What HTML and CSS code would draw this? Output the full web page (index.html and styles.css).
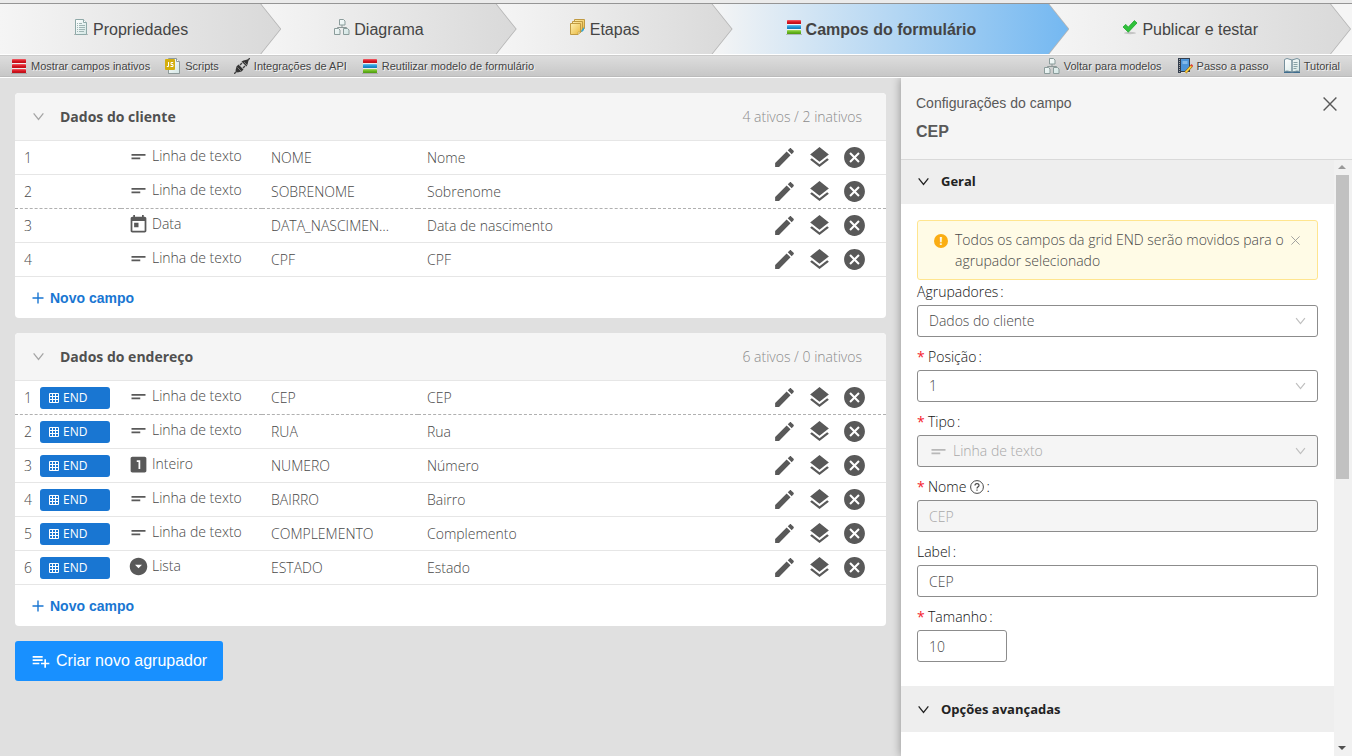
FILE: index.html
```html
<!DOCTYPE html>
<html lang="pt-BR">
<head>
<meta charset="utf-8">
<title>Campos do formulário</title>
<link rel="stylesheet" href="styles.css">
</head>
<body>
<svg class="sprite" aria-hidden="true">
  <defs>
    <linearGradient id="g-red" x1="0" y1="0" x2="0" y2="1"><stop offset="0" stop-color="#f4606a"/><stop offset=".5" stop-color="#d8141f"/><stop offset="1" stop-color="#b90f19"/></linearGradient>
    <linearGradient id="g-blue" x1="0" y1="0" x2="0" y2="1"><stop offset="0" stop-color="#6cc4ee"/><stop offset=".5" stop-color="#1d94d6"/><stop offset="1" stop-color="#1579b8"/></linearGradient>
    <linearGradient id="g-green" x1="0" y1="0" x2="0" y2="1"><stop offset="0" stop-color="#a6de62"/><stop offset=".5" stop-color="#69b81e"/><stop offset="1" stop-color="#4e9a12"/></linearGradient>
    <linearGradient id="g-gold" x1="0" y1="0" x2="1" y2="1"><stop offset="0" stop-color="#fff0b0"/><stop offset="1" stop-color="#e9b83f"/></linearGradient>
    <linearGradient id="g-page" x1="0" y1="0" x2="1" y2="1"><stop offset="0" stop-color="#ffffff"/><stop offset="1" stop-color="#d3e6e4"/></linearGradient>
  </defs>
  <symbol id="short-text" viewBox="0 0 24 24"><path d="M4 9h16v2H4zm0 4h10v2H4z"/></symbol>
  <symbol id="event" viewBox="0 0 24 24"><path d="M19 3h-1V1h-2v2H8V1H6v2H5c-1.110 0-2 .9-2 2v14c0 1.100.89 2 2 2h14c1.100 0 2-.9 2-2V5c0-1.100-.9-2-2-2zm0 16H5V8h14v11zM7 10h5v5H7z"/></symbol>
  <symbol id="one" viewBox="0 0 24 24"><path d="M19 3H5c-1.100 0-2 .9-2 2v14c0 1.100.9 2 2 2h14c1.100 0 2-.9 2-2V5c0-1.100-.9-2-2-2zm-5 14h-2V9h-2V7h4v10z"/></symbol>
  <symbol id="drop" viewBox="0 0 24 24"><path d="M12 2C6.480 2 2 6.480 2 12s4.480 10 10 10 10-4.480 10-10S17.520 2 12 2zm0 12l-4-4h8l-4 4z"/></symbol>
  <symbol id="edit" viewBox="0 0 24 24"><path d="M3 17.250V21h3.750L17.810 9.940l-3.750-3.750L3 17.250zM20.710 7.040c.39-.39.39-1.020 0-1.410l-2.340-2.340c-.39-.39-1.020-.39-1.410 0l-1.830 1.830 3.750 3.750 1.830-1.830z"/></symbol>
  <symbol id="layers" viewBox="0 0 24 24"><path d="M11.990 18.540l-7.370-5.730L3 14.070l9 7 9-7-1.630-1.270-7.380 5.740zM12 16l7.360-5.730L21 9l-9-7-9 7 1.630 1.270L12 16z"/></symbol>
  <symbol id="cancel" viewBox="0 0 24 24"><path d="M12 2C6.470 2 2 6.470 2 12s4.470 10 10 10 10-4.470 10-10S17.530 2 12 2zm5 13.590L15.590 17 12 13.410 8.410 17 7 15.590 10.590 12 7 8.410 8.410 7 12 10.590 15.590 7 17 8.410 13.410 12 17 15.590z"/></symbol>
  <symbol id="grid" viewBox="0 0 10 10"><path fill="none" stroke="currentColor" d="M.5.5h9v9h-9zM3.500 0v10M6.500 0v10M0 3.500h10M0 6.500h10"/></symbol>
  <symbol id="chevron" viewBox="0 0 10 8"><path fill="none" stroke="currentColor" stroke-width="1.200" d="M.6 1.200 5 6.600 9.400 1.200"/></symbol>
  <symbol id="plus" viewBox="0 0 12 12"><path fill="none" stroke="currentColor" stroke-width="1.400" d="M6 .5v11M.5 6h11"/></symbol>
  <symbol id="cross" viewBox="0 0 14 14"><path fill="none" stroke="currentColor" stroke-width="1.400" d="m.6.6 12.800 12.800M13.400.6.6 13.400"/></symbol>
  <symbol id="add-list" viewBox="0 0 24 24"><path d="M14 10H2v2h12v-2zm0-4H2v2h12V6zm4 8v-4h-2v4h-4v2h4v4h2v-4h4v-2h-4zM2 16h8v-2H2v2z"/></symbol>
  <symbol id="help" viewBox="0 0 14 14"><circle cx="7" cy="7" r="6.400" fill="none" stroke="currentColor"/><path fill="none" stroke="currentColor" stroke-width="1.200" d="M5 5.600C5 3 9 3 9 5.400 9 6.800 7 6.800 7 8.600M7 9.600v1.200"/></symbol>
  <symbol id="bars" viewBox="0 0 16 16"><path fill="#888" opacity=".5" d="M0 15h16v1H0z"/><path fill="#fff" opacity=".6" d="M1 1h14v14H1z"/><rect x="1" y="1" width="14" height="4" rx=".6" fill="url(#g-red)"/><rect x="1" y="6" width="14" height="4" rx=".6" fill="url(#g-blue)"/><rect x="1" y="11" width="14" height="4" rx=".6" fill="url(#g-green)"/></symbol>
  <symbol id="bars-red" viewBox="0 0 16 16"><path fill="#888" opacity=".5" d="M0 15h16v1H0z"/><path fill="#fff" opacity=".6" d="M1 1h14v14H1z"/><rect x="1" y="1" width="14" height="4" rx=".6" fill="url(#g-red)"/><rect x="1" y="6" width="14" height="4" rx=".6" fill="url(#g-red)"/><rect x="1" y="11" width="14" height="4" rx=".6" fill="url(#g-red)"/></symbol>
  <symbol id="page" viewBox="0 0 16 16"><path fill="#888" opacity=".5" d="M1 15h14v1H1z"/><path fill="url(#g-page)" stroke="#8fa9a8" d="M2.500.5h8l3 3v12h-11z"/><path fill="#fff" stroke="#8fa9a8" d="M10.500.5v3h3"/><path stroke="#9fb5b4" d="M4 4.500h1m1 0h3M4 6.500h1m1 0h6M4 8.500h1m1 0h6M4 10.500h1m1 0h6M4 12.500h1m1 0h5"/></symbol>
  <symbol id="tree" viewBox="0 0 16 16"><path fill="none" stroke="#8b9796" d="M8 6v3M3.500 10V8.500h9V10"/><path fill="url(#g-page)" stroke="#8b9c9b" d="M5.500.5h4l1.500 1.500v4H5.500zM.5 9.500h4L6 11v4.500H.5zM9.500 9.500h4L15 11v4.500H9.500z"/></symbol>
  <symbol id="stack" viewBox="0 0 16 16"><path fill="url(#g-gold)" stroke="#c09a42" d="M4.500.5h10v9l-2 2h-8z"/><path fill="url(#g-gold)" stroke="#c09a42" d="M2.500 2.500h10v9l-2 2h-8z"/><path fill="#31a6d8" d="m11 12 3-4v3l-2 2z"/><path fill="url(#g-gold)" stroke="#c09a42" d="M.5 4.500h10v8.500l-2.500 2.500H.5z"/><path fill="#fff3c4" stroke="#c09a42" stroke-width=".6" d="M8 15.500V13h2.500z"/></symbol>
  <symbol id="check" viewBox="0 0 16 16"><ellipse cx="8" cy="14" rx="6" ry="1.200" fill="#888" opacity=".4"/><path fill="#2fc23a" stroke="#1fa32d" stroke-width=".8" d="M1 8 3.800 5.400 6.200 8.200 12.400 1.600 15 4 6.300 13.200z"/></symbol>
  <symbol id="script" viewBox="0 0 16 16"><path fill="#888" opacity=".5" d="M3 15h12v1H3z"/><path fill="url(#g-page)" stroke="#8e9a99" d="M3.500.5h8l3 3v12h-11z"/><path fill="#fff" stroke="#8e9a99" d="M11.500.5v3h3"/><rect width="10" height="11" y="1" rx="1" fill="#d4ae0d"/><path fill="none" stroke="#fff" d="M3.500 4v4.500H1.800M8.200 4.500H6v2h2v2H5.500"/></symbol>
  <symbol id="plug" viewBox="0 0 16 16"><path fill="none" stroke="#444" stroke-width="1.400" d="m0 16 3-3M13 3l3-3M6 7l2-2M9 10l2-2"/><path fill="#333" d="m2.500 8.500 2-2 5 5-2 2-4 1-2-2zM7.500 3.500l2-1 4-1 1 1-1 4-1 2z"/><path stroke="#8c8c8c" stroke-width=".8" d="m3.500 9.500 3.500 3.500M10 4l3 3"/></symbol>
  <symbol id="notebook" viewBox="0 0 16 16"><path fill="#343e4d" d="M1 0h12v15H1z"/><path fill="#4c94d8" d="M4 1h8v12H4z"/><path fill="#83b9e9" d="M5.500 3h5v3h-5z"/><path stroke="#ddd" d="M4 14.500h9"/><path stroke="#aaa" d="M2.500 1v13" stroke-dasharray="1 1"/><path stroke="#8b5b12" stroke-width="2.600" d="m8.500 14.500 6.500-7"/><path stroke="#ffd641" stroke-width="1.800" d="m8.500 14.500 6.500-7"/><path fill="#e53c38" d="m13.500 7.500 1-1.500 1.500 1.500-1 1.500z"/></symbol>
  <symbol id="book" viewBox="0 0 16 16"><path fill="#3f6d8f" d="M0 2h16v13H0z"/><path fill="url(#g-page)" stroke="#76909c" d="M.5 1.500 3 .5l5 1.500v12L3 13l-2.500.5zM15.500 1.500 13 .5 8 2v12l5-1 2.500.5z"/><path stroke="#89a3a7" d="M9.500 4.500h4m-4 2h4m-4 2h4m-4 2h3"/></symbol>
</svg>

<nav class="steps">
  <a class="step" href="#"><svg class="ico16"><use href="#page"/></svg>Propriedades</a>
  <a class="step" href="#"><svg class="ico16"><use href="#tree"/></svg>Diagrama</a>
  <a class="step" href="#"><svg class="ico16"><use href="#stack"/></svg>Etapas</a>
  <a class="step step-current" href="#"><svg class="ico16"><use href="#bars"/></svg>Campos do formulário</a>
  <a class="step" href="#"><svg class="ico16"><use href="#check"/></svg>Publicar e testar</a>
</nav>

<div class="toolbar">
  <a class="tool" href="#"><svg class="ico16"><use href="#bars-red"/></svg>Mostrar campos inativos</a>
  <a class="tool" href="#"><svg class="ico16"><use href="#script"/></svg>Scripts</a>
  <a class="tool" href="#"><svg class="ico16"><use href="#plug"/></svg>Integrações de API</a>
  <a class="tool tool-last" href="#"><svg class="ico16"><use href="#bars"/></svg>Reutilizar modelo de formulário</a>
  <a class="tool" href="#"><svg class="ico16"><use href="#tree"/></svg>Voltar para modelos</a>
  <a class="tool" href="#"><svg class="ico16"><use href="#notebook"/></svg>Passo a passo</a>
  <a class="tool" href="#"><svg class="ico16"><use href="#book"/></svg>Tutorial</a>
</div>

<div class="workspace">
  <main class="groups">
    <section class="group">
      <header class="group-head">
        <svg class="chev"><use href="#chevron"/></svg>
        <h2>Dados do cliente</h2>
        <span class="count">4 ativos / 2 inativos</span>
      </header>
      <table class="fields">
        <colgroup><col class="c-num"><col class="c-type"><col class="c-name"><col class="c-label"><col></colgroup>
        <tbody>
        <tr><td><div class="pos">1</div></td><td><div class="type"><svg><use href="#short-text"/></svg>Linha de texto</div></td><td class="clip">NOME</td><td>Nome</td><td><div class="acts"><button aria-label="Editar"><svg><use href="#edit"/></svg></button><button aria-label="Camadas"><svg><use href="#layers"/></svg></button><button aria-label="Remover"><svg><use href="#cancel"/></svg></button></div></td></tr>
        <tr class="dashed"><td><div class="pos">2</div></td><td><div class="type"><svg><use href="#short-text"/></svg>Linha de texto</div></td><td class="clip">SOBRENOME</td><td>Sobrenome</td><td><div class="acts"><button aria-label="Editar"><svg><use href="#edit"/></svg></button><button aria-label="Camadas"><svg><use href="#layers"/></svg></button><button aria-label="Remover"><svg><use href="#cancel"/></svg></button></div></td></tr>
        <tr><td><div class="pos">3</div></td><td><div class="type"><svg><use href="#event"/></svg>Data</div></td><td class="clip">DATA_NASCIMENTO</td><td>Data de nascimento</td><td><div class="acts"><button aria-label="Editar"><svg><use href="#edit"/></svg></button><button aria-label="Camadas"><svg><use href="#layers"/></svg></button><button aria-label="Remover"><svg><use href="#cancel"/></svg></button></div></td></tr>
        <tr><td><div class="pos">4</div></td><td><div class="type"><svg><use href="#short-text"/></svg>Linha de texto</div></td><td class="clip">CPF</td><td>CPF</td><td><div class="acts"><button aria-label="Editar"><svg><use href="#edit"/></svg></button><button aria-label="Camadas"><svg><use href="#layers"/></svg></button><button aria-label="Remover"><svg><use href="#cancel"/></svg></button></div></td></tr>
        </tbody>
      </table>
      <button class="new-field"><svg><use href="#plus"/></svg>Novo campo</button>
    </section>

    <section class="group">
      <header class="group-head">
        <svg class="chev"><use href="#chevron"/></svg>
        <h2>Dados do endereço</h2>
        <span class="count">6 ativos / 0 inativos</span>
      </header>
      <table class="fields">
        <colgroup><col class="c-num"><col class="c-type"><col class="c-name"><col class="c-label"><col></colgroup>
        <tbody>
        <tr class="dashed"><td><div class="pos">1<span class="badge"><svg><use href="#grid"/></svg>END</span></div></td><td><div class="type"><svg><use href="#short-text"/></svg>Linha de texto</div></td><td class="clip">CEP</td><td>CEP</td><td><div class="acts"><button aria-label="Editar"><svg><use href="#edit"/></svg></button><button aria-label="Camadas"><svg><use href="#layers"/></svg></button><button aria-label="Remover"><svg><use href="#cancel"/></svg></button></div></td></tr>
        <tr><td><div class="pos">2<span class="badge"><svg><use href="#grid"/></svg>END</span></div></td><td><div class="type"><svg><use href="#short-text"/></svg>Linha de texto</div></td><td class="clip">RUA</td><td>Rua</td><td><div class="acts"><button aria-label="Editar"><svg><use href="#edit"/></svg></button><button aria-label="Camadas"><svg><use href="#layers"/></svg></button><button aria-label="Remover"><svg><use href="#cancel"/></svg></button></div></td></tr>
        <tr><td><div class="pos">3<span class="badge"><svg><use href="#grid"/></svg>END</span></div></td><td><div class="type"><svg><use href="#one"/></svg>Inteiro</div></td><td class="clip">NUMERO</td><td>Número</td><td><div class="acts"><button aria-label="Editar"><svg><use href="#edit"/></svg></button><button aria-label="Camadas"><svg><use href="#layers"/></svg></button><button aria-label="Remover"><svg><use href="#cancel"/></svg></button></div></td></tr>
        <tr><td><div class="pos">4<span class="badge"><svg><use href="#grid"/></svg>END</span></div></td><td><div class="type"><svg><use href="#short-text"/></svg>Linha de texto</div></td><td class="clip">BAIRRO</td><td>Bairro</td><td><div class="acts"><button aria-label="Editar"><svg><use href="#edit"/></svg></button><button aria-label="Camadas"><svg><use href="#layers"/></svg></button><button aria-label="Remover"><svg><use href="#cancel"/></svg></button></div></td></tr>
        <tr><td><div class="pos">5<span class="badge"><svg><use href="#grid"/></svg>END</span></div></td><td><div class="type"><svg><use href="#short-text"/></svg>Linha de texto</div></td><td class="clip">COMPLEMENTO</td><td>Complemento</td><td><div class="acts"><button aria-label="Editar"><svg><use href="#edit"/></svg></button><button aria-label="Camadas"><svg><use href="#layers"/></svg></button><button aria-label="Remover"><svg><use href="#cancel"/></svg></button></div></td></tr>
        <tr><td><div class="pos">6<span class="badge"><svg><use href="#grid"/></svg>END</span></div></td><td><div class="type"><svg><use href="#drop"/></svg>Lista</div></td><td class="clip">ESTADO</td><td>Estado</td><td><div class="acts"><button aria-label="Editar"><svg><use href="#edit"/></svg></button><button aria-label="Camadas"><svg><use href="#layers"/></svg></button><button aria-label="Remover"><svg><use href="#cancel"/></svg></button></div></td></tr>
        </tbody>
      </table>
      <button class="new-field"><svg><use href="#plus"/></svg>Novo campo</button>
    </section>

    <button class="new-group"><svg><use href="#add-list"/></svg>Criar novo agrupador</button>
  </main>

  <aside class="panel">
    <header class="panel-head">
      <div>
        <p>Configurações do campo</p>
        <h1>CEP</h1>
      </div>
      <button class="close" aria-label="Fechar"><svg><use href="#cross"/></svg></button>
    </header>
    <div class="panel-body">
      <div class="panel-scroll">
        <button class="section"><svg><use href="#chevron"/></svg>Geral</button>
        <form class="form">
          <div class="alert">
            <span class="alert-icon">!</span>
            <p>Todos os campos da grid END serão movidos para o agrupador selecionado</p>
            <button type="button" aria-label="Dispensar"><svg><use href="#cross"/></svg></button>
          </div>
          <div class="field">
            <label for="f-group">Agrupadores<i>:</i></label>
            <div class="select"><select id="f-group"><option>Dados do cliente</option></select><svg class="arrow"><use href="#chevron"/></svg></div>
          </div>
          <div class="field">
            <label for="f-pos"><b>*</b>Posição<i>:</i></label>
            <div class="select"><select id="f-pos"><option>1</option></select><svg class="arrow"><use href="#chevron"/></svg></div>
          </div>
          <div class="field">
            <label for="f-type"><b>*</b>Tipo<i>:</i></label>
            <div class="select select-icon"><svg class="lead"><use href="#short-text"/></svg><select id="f-type" disabled><option>Linha de texto</option></select><svg class="arrow"><use href="#chevron"/></svg></div>
          </div>
          <div class="field">
            <label for="f-name"><b>*</b>Nome<svg class="help"><use href="#help"/></svg><i>:</i></label>
            <input id="f-name" type="text" value="CEP" disabled>
          </div>
          <div class="field">
            <label for="f-label">Label<i>:</i></label>
            <input id="f-label" type="text" value="CEP">
          </div>
          <div class="field">
            <label for="f-size"><b>*</b>Tamanho<i>:</i></label>
            <input id="f-size" class="short" type="text" value="10">
          </div>
        </form>
        <button class="section section-next"><svg><use href="#chevron"/></svg>Opções avançadas</button>
      </div>
      <div class="scrollbar" aria-hidden="true">
        <span class="up"></span><span class="thumb"></span><span class="down"></span>
      </div>
    </div>
  </aside>
</div>
</body>
</html>
```
FILE: styles.css
```css
* { box-sizing: border-box; }

html, body { height: 100%; }

body {
  margin: 0;
  display: flex;
  flex-direction: column;
  overflow: hidden;
  background: #e0e0e0;
  color: #484848;
  font: 300 14px/20px "Open Sans", "Noto Sans", sans-serif;
}

h1, h2, p { margin: 0; }
a { color: inherit; text-decoration: none; }
svg { flex: none; fill: currentColor; }

button {
  margin: 0;
  padding: 0;
  border: 0;
  background: none;
  color: inherit;
  font: inherit;
  cursor: pointer;
}

.sprite { position: absolute; width: 0; height: 0; }
.ico16 { width: 16px; height: 16px; }

/* Step navigation */
.steps {
  flex: none;
  display: flex;
  height: 54px;
  padding-right: 21px;
  border-top: 3px solid #ebebeb;
  background: #f5f5f5;
  box-shadow: inset 0 1px #959595;
}

.step {
  position: relative;
  isolation: isolate;
  flex: 1 1 auto;
  display: flex;
  justify-content: center;
  align-items: center;
  gap: 4px;
  margin-top: 1px;
  padding-top: 2px;
  color: #444;
  font: 400 16px/20px "Liberation Sans", Arial, sans-serif;
}

.step .ico16 { margin-bottom: 6px; }
.step:nth-child(1) { z-index: 5; }
.step:nth-child(2) { z-index: 4; }
.step:nth-child(3) { z-index: 3; }
.step:nth-child(4) { z-index: 2; }
.step:nth-child(5) { z-index: 1; }

.step::before, .step::after {
  content: "";
  position: absolute;
  z-index: -1;
  inset: 0 -19px 0 0;
  background: linear-gradient(90deg, #f5f5f5, #d9d9d9);
  clip-path: polygon(0 0, calc(100% - 20px) 0, 100% 50%, calc(100% - 20px) 100%, 0 100%);
}

.step::before { right: -20px; background: #b4b4b4; z-index: -2; }
.step-current { font-weight: 700; }
.step-current::after { background: linear-gradient(90deg, #f5f5f5, #b5d7f3 50%, #74b8f1); }

/* Toolbar */
.toolbar {
  position: relative;
  z-index: 1;
  flex: none;
  display: flex;
  align-items: center;
  gap: 15px;
  height: 24px;
  padding: 0 12px 0 11px;
  border-top: 1px solid #fff;
  border-bottom: 1px solid #fff;
  background: linear-gradient(#dedede, #c6c6c6);
  box-shadow: inset 0 1px #ccc, inset 0 -1px #bbb;
}

.tool {
  display: flex;
  align-items: center;
  gap: 4px;
  color: #444;
  font: 400 11px/16px "Liberation Sans", Arial, sans-serif;
  text-shadow: 1px 1px #f2f2f2;
}

.tool-last { margin-right: auto; }

/* Field groups */
.workspace { flex: 1; display: flex; min-height: 0; }

.groups {
  flex: 1;
  min-width: 0;
  display: flex;
  flex-direction: column;
  align-items: flex-start;
  gap: 15px;
  padding: 15px;
}

.group {
  width: 100%;
  border-radius: 4px;
  background: #fff;
  overflow: hidden;
}

.group-head {
  display: flex;
  align-items: center;
  height: 48px;
  padding: 0 24px 0 18px;
  border-bottom: 1px solid #e6e6e6;
  background: #f5f5f5;
}

.chev { width: 11px; height: 9px; color: #a6a6a6; }
.group-head h2 { margin-left: 16px; color: #505050; font-size: 14px; font-weight: 700; }
.count { margin-left: auto; color: #8c8c8c; }

.fields { width: 100%; border-spacing: 0; table-layout: fixed; }
.c-num { width: 106px; }
.c-type { width: 141px; }
.c-name { width: 156px; }
.c-label { width: 235px; }

.fields td {
  height: 34px;
  padding: 0 9px;
  border-bottom: 1px solid #e6e6e6;
  white-space: nowrap;
}

.fields .dashed td { border-bottom: 1px dashed #b0b0b0; }
.fields .clip { padding-right: 26px; overflow: hidden; text-overflow: ellipsis; }
.fields td:nth-child(2) { padding-left: 7px; }

.pos { display: flex; align-items: center; gap: 8px; }

.badge {
  display: flex;
  align-items: center;
  gap: 4px;
  width: 70px;
  height: 22px;
  padding: 0 9px;
  border-radius: 3px;
  background: #1976d2;
  color: #fff;
  font-size: 12px;
  font-weight: 400;
}

.badge svg { width: 10px; height: 10px; }

.type { display: flex; align-items: center; gap: 3px; padding-bottom: 3px; }
.type svg { width: 21px; height: 21px; color: #595959; }

.acts { display: flex; justify-content: flex-end; gap: 10px; padding-right: 10px; color: #595959; }
.acts button { display: flex; }
.acts svg { width: 25px; height: 25px; }

.new-field {
  display: flex;
  align-items: center;
  gap: 6px;
  height: 41px;
  padding: 0 17px;
  color: #1976d2;
  font: 700 14px/20px "Liberation Sans", Arial, sans-serif;
}

.new-field svg { width: 12px; height: 12px; }

.new-group {
  display: flex;
  align-items: center;
  gap: 5px;
  height: 40px;
  padding: 0 16px;
  border-radius: 3px;
  background: #1890ff;
  color: #fff;
  font: 400 16px/20px "Liberation Sans", Arial, sans-serif;
}

.new-group svg { width: 20px; height: 20px; }

/* Settings panel */
.panel {
  flex: none;
  display: flex;
  flex-direction: column;
  width: 451px;
  background: #fff;
  box-shadow: -1px 0 8px rgba(0, 0, 0, .3);
}

.panel-head {
  display: flex;
  justify-content: space-between;
  align-items: flex-start;
  padding: 15px;
  height: 82px;
  border-bottom: 1px solid #d9d9d9;
  background: #f5f5f5;
  color: #595959;
  font-family: "Liberation Sans", Arial, sans-serif;
  font-weight: 400;
}

.panel-head h1 { margin-top: 9px; font-size: 16px; line-height: 20px; }
.close svg { display: block; width: 14px; height: 14px; margin: 4px 0; }

.panel-body { flex: 1; display: flex; min-height: 0; }
.panel-scroll { flex: 1; overflow: hidden; }

.section {
  display: flex;
  align-items: center;
  gap: 12px;
  width: 100%;
  height: 44px;
  padding: 0 17px 2px;
  background: #eee;
  color: #222;
  font-size: 13px;
  font-weight: 700;
}

.section-next { height: 46px; padding-bottom: 0; }
.section svg { width: 11px; height: 9px; }

.form { display: flex; flex-direction: column; gap: 8px; padding: 16px 16px 24px; }

.alert {
  display: flex;
  align-items: flex-start;
  gap: 2px;
  margin-bottom: -8px;
  padding: 8px 17px 8px 16px;
  border: 1px solid #ffe58f;
  border-radius: 3px;
  background: #fffbe6;
  line-height: 21px;
}

.alert p { flex: 1; }
.alert button svg { display: block; width: 9px; height: 9px; margin: 7px 0; color: #999; }

.alert-icon {
  width: 14px;
  height: 14px;
  margin: 5px 5px 0 0;
  border-radius: 50%;
  background: #faad14;
  color: #fff;
  font-size: 11px;
  font-weight: 700;
  line-height: 14px;
  text-align: center;
}

.field label { display: flex; align-items: center; height: 25px; padding-bottom: 1px; color: #111; }
.field b { width: 11px; color: #f5222d; font-weight: 400; }
.field i { margin-left: 2px; font-style: normal; }
.help { width: 14px; height: 14px; margin-left: 4px; color: #484848; }

.field input, .field select {
  display: block;
  width: 100%;
  height: 32px;
  margin: 0;
  padding: 0 11px;
  border: 1px solid #8c8c8c;
  border-radius: 3px;
  background: #fff;
  color: #484848;
  font: inherit;
  appearance: none;
}

.field input:disabled, .field select:disabled {
  background: #f5f5f5;
  color: #a8a8a8;
  opacity: 1;
}

.field .short { width: 90px; }

.select { position: relative; }
.select-icon select { padding-left: 35px; }
.arrow { position: absolute; right: 12px; top: 12px; width: 11px; height: 8px; color: #bfbfbf; }
.lead { position: absolute; left: 11px; top: 6px; width: 21px; height: 21px; color: #b8b8b8; }

.scrollbar {
  flex: none;
  display: flex;
  flex-direction: column;
  align-items: center;
  width: 18px;
  padding: 5px 2px 6px 0;
  background: #f1f1f1;
}

.up, .down { border: 4px solid transparent; }
.up { border-top: 0; border-bottom-color: #999; }
.down { border-bottom: 0; border-top-color: #505050; margin-top: auto; }
.thumb { width: 13px; height: 52%; margin-top: 6px; background: #c1c1c1; }
```
